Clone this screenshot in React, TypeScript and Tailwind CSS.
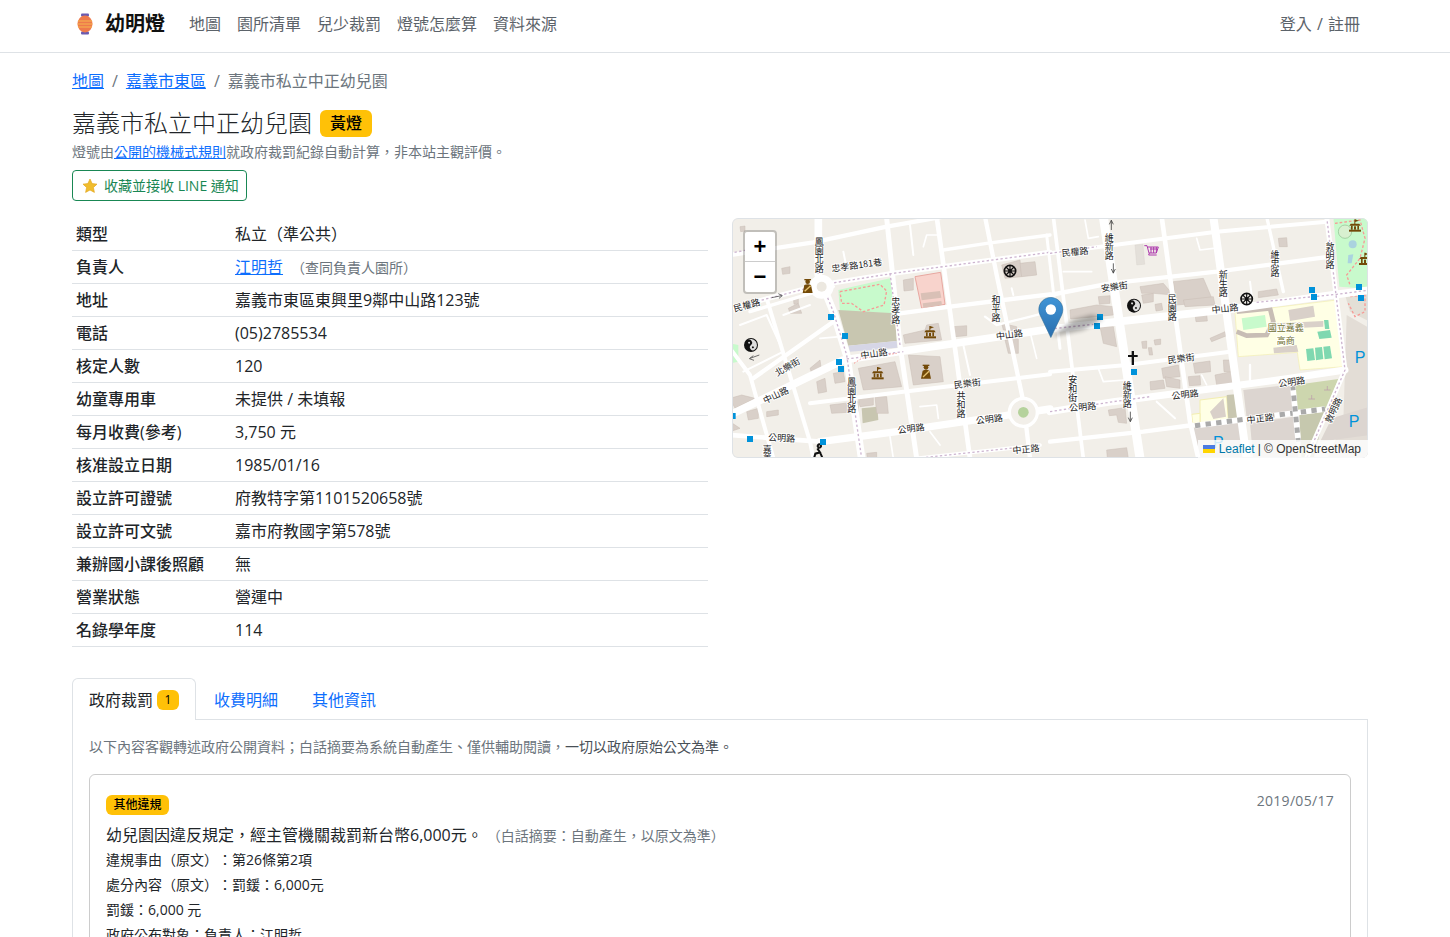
import React from "react";

const rows: [string, React.ReactNode][] = [
  ["類型", "私立\uFF08準公共\uFF09"],
  [
    "負責人",
    <>
      <a href="#" className="text-[#0d6efd] underline">江明哲</a>
      <span className="ml-2 text-sm text-[#6c757d]">{"\uFF08查同負責人園所\uFF09"}</span>
    </>,
  ],
  ["地址", "嘉義市東區東興里9鄰中山路123號"],
  ["電話", "(05)2785534"],
  ["核定人數", "120"],
  ["幼童專用車", "未提供 / 未填報"],
  ["每月收費(參考)", "3,750 元"],
  ["核准設立日期", "1985/01/16"],
  ["設立許可證號", "府教特字第1101520658號"],
  ["設立許可文號", "嘉市府教國字第578號"],
  ["兼辦國小課後照顧", "無"],
  ["營業狀態", "營運中"],
  ["名錄學年度", "114"],
];

const navLinks = ["地圖", "園所清單", "兒少裁罰", "燈號怎麼算", "資料來源"];

// map data is in 3x units, the right half sits under translate(960 0)
const leftRoads: [string, number][] = [
  ["0,120 250,82 470,35 640,5", 13],
  ["640,105 770,85 960,60", 10],
  ["510,295 660,275 960,238", 13],
  ["240,565 520,530 860,490 960,478", 12],
  ["560,730 930,690", 11],
  ["70,490 310,320", 13],
  ["0,400 60,480 130,730", 12],
  ["110,250 240,680 250,730", 12],
  ["470,10 510,390 560,730", 15],
  ["620,5 660,290 720,730", 14],
  ["765,5 800,180 880,560 900,730", 13],
  ["950,60 990,400", 9],
  ["0,660 270,680", 14],
  ["60,290 310,215", 10],
  ["540,30 550,120", 6],
  ["580,95 590,60 625,60", 5],
  ["340,110 350,160", 6],
  ["270,370 330,365", 5],
  ["570,575 620,570 625,610", 5],
  ["700,390 720,480", 6],
  ["900,350 920,430", 5],
  ["765,305 800,330 880,310 960,290", 7],
  ["30,330 110,300 160,410 40,470", 6],
  ["160,300 240,270", 6],
  ["845,220 850,240", 6],
  ["480,665 490,730", 5],
  ["600,650 630,690", 5],
];
const leftMain: [string, number][] = [
  ["265,5 265,180 310,290 350,420 395,730", 23],
  ["0,600 340,435 960,342", 23],
  ["0,280 270,210 490,175 960,112", 15],
  ["270,680 500,650 870,595 960,582", 22],
];
const rightRoads: [string, number][] = [
  ["0,115 500,50 830,20", 12],
  ["10,5 100,730", 11],
  ["335,5 420,620 445,730", 14],
  ["650,5 700,230", 10],
  ["0,240 180,205 500,170 840,125", 13],
  ["0,470 230,450 540,410", 12],
  ["0,680 280,650 430,630", 13],
  ["320,560 375,610", 6],
  ["600,450 600,500", 7],
  ["40,170 125,170", 5],
  ["105,15 115,70 145,65", 5],
  ["440,70 450,105 490,100", 5],
  ["145,460 160,500 225,495", 5],
  ["600,200 605,240", 6],
  ["455,480 470,510", 5],
];
const rightMain: [string, number][] = [
  ["0,342 130,328 560,280 860,238 960,225", 23],
  ["160,5 270,730", 27],
  ["490,5 590,730", 24],
  ["0,590 190,560 720,490 885,465", 21],
  ["830,5 885,465 800,660 770,730", 15],
];
const dashes = [
  "0,280 270,210 490,175 960,112",
  "0,115 50,105",
  "265,100 265,180 310,290 350,420 395,730",
  "480,175 510,390",
  "350,432 520,410",
  "560,730 930,690",
];
const buildingsLeft = [
  "385,460 495,440 515,515 400,525",
  "535,420 630,425 640,500 550,510",
  "520,360 585,345 590,330 625,325 635,375 525,385",
  "300,570 385,560 385,590 305,595",
  "385,550 430,545 430,570 390,575",
  "435,545 470,545 475,595 440,595",
  "50,590 85,580 85,610 55,615",
  "0,550 35,540 75,550 15,580",
  "310,475 340,470 345,500 315,505",
  "260,500 285,490 290,530 265,535",
  "520,195 550,190 550,225 522,228",
  "175,280 205,265 215,295 180,295",
  "670,335 710,332 710,362 675,365",
  "815,150 870,135 875,185 825,190",
  "870,145 915,140 920,180 875,185",
  "825,375 865,372 865,415 835,415",
  "815,325 860,335 860,350 820,345",
  "0,620 30,640 0,650",
  "110,590 145,585 145,600 110,605",
  "240,460 270,435 275,470 245,475",
  "155,160 180,155 180,175 158,178",
  "30,35 45,33 45,48 32,50",
  "190,250 205,245 205,265 192,268",
  "410,715 440,712 440,730 412,730",
];
const buildingsRight = [
  "60,285 140,270 190,275 190,300 62,312",
  "150,335 190,335 200,395 160,385",
  "270,215 340,205 370,240 310,235 275,235",
  "275,240 310,235 310,260 280,265",
  "370,200 460,190 490,260 380,270",
  "145,245 180,242 180,265 148,268",
  "435,298 470,295 472,318 438,320",
  "480,370 525,350 530,362 485,380",
  "275,380 290,378 290,400 278,400",
  "312,375 332,372 332,388 315,390",
  "295,398 305,398 308,420 298,420",
  "335,460 385,450 390,485 340,490",
  "300,500 340,495 345,520 302,525",
  "345,485 390,495 390,520 350,515",
  "415,485 450,482 452,510 418,512",
  "430,445 480,438 482,470 435,475",
  "495,480 545,470 548,505 500,510",
  "520,435 542,435 545,470 522,470",
  "175,585 225,578 230,625 205,622 200,600 178,602",
  "625,230 680,222 685,240 625,248",
  "685,70 710,68 712,95 688,95",
  "170,705 230,698 235,730 172,730",
  "400,255 490,245 495,270 405,275",
  "315,268 335,265 338,285 318,288",
];

function Road({ points, width, color = "#fff" }: { points: string; width: number; color?: string }) {
  return <polyline points={points} fill="none" stroke={color} strokeWidth={width} strokeLinejoin="round" strokeLinecap="round" />;
}

function Lbl({ x, y, t, rot = 0, v = false, color = "#222" }: { x: number; y: number; t: string; rot?: number; v?: boolean; color?: string }) {
  return (
    <text
      x={x}
      y={y}
      transform={rot ? `rotate(${rot} ${x} ${y})` : undefined}
      textAnchor="middle"
      dominantBaseline="central"
      fontSize="27"
      fill={color}
      stroke="#fff"
      strokeWidth="5"
      className={v ? "font-['Noto_Sans_CJK_TC',sans-serif] [paint-order:stroke] [writing-mode:vertical-rl]" : "font-['Noto_Sans_CJK_TC',sans-serif] [paint-order:stroke]"}
    >
      {t}
    </text>
  );
}

function Temple({ x, y, c = "#734a08" }: { x: number; y: number; c?: string }) {
  return (
    <g transform={`translate(${x} ${y})`} fill={c}>
      <rect x="-2" y="-22" width="3" height="14" />
      <path d="M0 -22 L12 -18 L0 -14Z" />
      <path d="M-17 -3 L-13 -9 H13 L17 -3Z" />
      <rect x="-12" y="-3" width="5" height="12" />
      <rect x="7" y="-3" width="5" height="12" />
      <rect x="-3" y="-1" width="6" height="10" />
      <rect x="-18" y="9" width="36" height="6" />
    </g>
  );
}

function Person({ x, y }: { x: number; y: number }) {
  return (
    <g transform={`translate(${x} ${y})`}>
      <circle cx="0" cy="-13" r="7" fill="#734a08" />
      <rect x="-10" y="-21" width="20" height="4" fill="#734a08" />
      <path d="M-15 21 L-10 -3 Q0 -8 10 -3 L15 21Z" fill="#734a08" />
      <path d="M-9 16 L9 -1" stroke="#e6c370" strokeWidth="4" />
    </g>
  );
}

function YinYang({ x, y }: { x: number; y: number }) {
  return (
    <g transform={`translate(${x} ${y})`}>
      <circle r="21" fill="#111" />
      <g transform="rotate(-40)">
        <path d="M0 -18 A18 18 0 0 1 0 18 A9 9 0 0 1 0 0 A9 9 0 0 0 0 -18Z" fill="#ddd" />
        <circle cx="0" cy="9" r="3" fill="#111" />
        <circle cx="0" cy="-9" r="3" fill="#ddd" />
      </g>
    </g>
  );
}

function Wheel({ x, y }: { x: number; y: number }) {
  return (
    <g transform={`translate(${x} ${y})`} stroke="#111" fill="none">
      <circle r="17" strokeWidth="5" />
      <circle r="5" fill="#111" strokeWidth="1" />
      <path d="M-17 0H17M0 -17V17M-12 -12L12 12M12 -12L-12 12" strokeWidth="3.5" />
    </g>
  );
}

function Sq({ x, y }: { x: number; y: number }) {
  return <rect x={x - 9} y={y - 9} width="18" height="18" fill="#0092da" />;
}

function MapDrawing() {
  return (
    <svg viewBox="6 9 1908 720" width="636" height="240" className="block">
      <defs>
        <linearGradient id="pin" x1="0" y1="0" x2="0" y2="1">
          <stop offset="0" stopColor="#3f94d6" />
          <stop offset="1" stopColor="#2a6eae" />
        </linearGradient>
        <filter id="soft" x="-30%" y="-30%" width="160%" height="160%">
          <feGaussianBlur stdDeviation="7" />
        </filter>
      </defs>
      <rect x="0" y="0" width="1920" height="735" fill="#f2efe9" />

      {/* left half */}
      <g>
        <polygon points="0,385 25,390 25,440 0,445" fill="#c8facc" />
        <polygon points="325,225 480,190 498,295 330,290" fill="#c8facc" />
        <polygon points="325,285 495,295 500,378 355,392" fill="#c8c6b0" />
        <polygon points="355,392 500,378 502,398 360,410" fill="#d6d6e6" />
        <polyline points="330,230 450,208 470,228 462,270 400,290 365,265 335,265 330,230" fill="none" stroke="#f79a96" strokeWidth="4" strokeDasharray="8 6" />
        <polygon points="555,185 632,172 645,268 575,280" fill="#f8d3cc" stroke="#e8a7a0" strokeWidth="3" />
        <polygon points="572,235 630,228 634,248 575,256" fill="#d9c0b6" />
        <polygon points="578,265 634,258 636,270 580,278" fill="#d9c0b6" />
        <polygon points="395,580 442,575 445,615 398,625" fill="#c8c6b0" />
        {buildingsLeft.map((p, i) => (
          <polygon key={i} points={p} fill="#d9d0c9" stroke="#c8bdb5" strokeWidth="1.5" />
        ))}
        {leftRoads.map(([p, w], i) => <Road key={i} points={p} width={w} />)}
        {leftMain.map(([p, w], i) => <Road key={i} points={p} width={w} />)}
        {dashes.map((p, i) => (
          <polyline key={i} points={p} fill="none" stroke="#cdb5d0" strokeWidth="4" strokeDasharray="7 7" />
        ))}
        <polyline points="372,445 395,430 500,415" fill="none" stroke="#f79a96" strokeWidth="3" strokeDasharray="5 5" />
        <circle cx="275" cy="215" r="36" fill="#fff" />
        <circle cx="275" cy="215" r="15" fill="#ece8e0" />
        <circle cx="880" cy="592" r="42" fill="#f2efe9" stroke="#fff" strokeWidth="10" />
        <circle cx="880" cy="592" r="16" fill="#b5d29c" />

        <Person x={233} y={213} />
        <Person x={588} y={470} />
        <Temple x={600} y={355} />
        <Temple x={443} y={478} />
        <YinYang x={63} y={390} />
        <Wheel x={840} y={168} />
        <path d="M262 700 l8 12 l-14 4 l-4 14 M268 698 a5 5 0 1 1 .1 0 M270 712 l8 18" stroke="#111" strokeWidth="6" fill="none" />
        <path d="M125 248 L155 242 M145 236 L157 242 L147 250" stroke="#555" strokeWidth="2.5" fill="none" />
        <path d="M60 430 L88 420 M70 422 L58 431 L72 436" stroke="#555" strokeWidth="2.5" fill="none" />

        {[[303, 306], [345, 363], [327, 441], [333, 462], [60, 672], [279, 681], [8, 603]].map(([x, y]) => <Sq key={`${x}-${y}`} x={x} y={y} />)}

        <Lbl x={268} y={120} t="鳳園北路" v />
        <Lbl x={380} y={150} t="忠孝路181巷" rot={-8} />
        <Lbl x={50} y={270} t="民權路" rot={-15} />
        <Lbl x={497} y={287} t="忠孝路" v />
        <Lbl x={798} y={280} t="和平路" v />
        <Lbl x={838} y={358} t="中山路" rot={-8} />
        <Lbl x={432} y={415} t="中山路" rot={-8} />
        <Lbl x={172} y={455} t="北樂街" rot={-30} />
        <Lbl x={137} y={540} t="中山路" rot={-25} />
        <Lbl x={365} y={540} t="鳳園北路" v />
        <Lbl x={712} y={505} t="民樂街" rot={-7} />
        <Lbl x={693} y={570} t="共和路" v />
        <Lbl x={778} y={612} t="公明路" rot={-7} />
        <Lbl x={543} y={640} t="公明路" rot={-7} />
        <Lbl x={155} y={668} t="公明路" rot={3} />
        <Lbl x={888} y={702} t="中正路" rot={-5} />
        <Lbl x={112} y={716} t="嘉義" v />
      </g>

      {/* right half */}
      <g transform="translate(960 0)">
        <polygon points="555,292 860,255 882,455 750,465 742,412 565,425" fill="#ffffe5" stroke="#f3eeb0" strokeWidth="2" />
        <polygon points="575,310 645,300 650,335 580,345" fill="#c8facc" />
        <polyline points="560,290 660,280 670,320 650,360 590,362 560,350" fill="none" stroke="#c8bdb5" strokeWidth="14" />
        <polygon points="715,285 790,272 795,305 720,318" fill="#d9d0c9" />
        <polygon points="680,325 820,318 820,335 685,342" fill="#d9d0c9" />
        <polygon points="670,398 740,390 745,410 672,415" fill="#d9d0c9" />
        <polygon points="802,350 840,345 845,368 808,372" fill="#7fd8b0" />
        <polygon points="822,315 835,315 838,342 825,342" fill="#7fd8b0" />
        <polygon points="768,402 790,400 795,435 772,438" fill="#7fd8b0" />
        <polygon points="795,398 816,396 820,432 798,436" fill="#7fd8b0" />
        <polygon points="820,395 840,393 846,430 824,433" fill="#7fd8b0" />

        <polygon points="850,5 960,5 960,222 868,215" fill="#c8facc" />
        <polyline points="855,25 930,15 945,70 930,130 890,180 900,210" fill="none" stroke="#f79a96" strokeWidth="4" strokeDasharray="8 6" />
        <circle cx="885" cy="50" r="20" fill="#d8f0d0" stroke="#8ebd8e" strokeWidth="2" />
        <circle cx="908" cy="88" r="12" fill="#aad3df" />
        <polygon points="895,120 910,118 905,145 893,145" fill="#aad3df" />
        <polygon points="885,240 960,235 960,320 900,290" fill="#e3dfd6" />
        <polyline points="900,245 945,240 945,290 915,305 895,265" fill="none" stroke="#f79a96" strokeWidth="4" strokeDasharray="8 6" />
        <polygon points="890,300 960,340 960,735 830,735 880,620" fill="#e3ddd6" />

        <polygon points="580,525 730,508 738,590 590,610" fill="#dcd5d0" />
        <polygon points="735,510 865,492 830,580 742,590" fill="#cdd6ae" />
        <polygon points="748,600 825,590 790,735 755,735" fill="#c6c8ae" />
        <polygon points="430,640 565,618 590,735 440,735" fill="#dcd5d0" />
        <polygon points="600,625 730,605 745,735 610,735" fill="#dcd5d0" />
        <polygon points="845,610 960,575 960,660 810,680" fill="#dcd5d0" />
        <polygon points="450,555 530,545 535,615 450,625" fill="#ffffe5" stroke="#f3eeb0" strokeWidth="3" />
        <polygon points="425,598 450,595 450,625 428,625" fill="#ffffe5" stroke="#f3eeb0" strokeWidth="3" />
        <polygon points="530,540 555,538 565,610 535,615" fill="#c8c6b0" />
        <polygon points="480,590 520,550 528,605 490,612" fill="#d9d0c9" />
        <rect x="255" y="90" width="24" height="60" fill="#e4e0da" stroke="#d5d0ca" transform="rotate(-5 255 90)" />

        {buildingsRight.map((p, i) => (
          <polygon key={i} points={p} fill="#d9d0c9" stroke="#c8bdb5" strokeWidth="1.5" />
        ))}
        {rightRoads.map(([p, w], i) => <Road key={i} points={p} width={w} />)}
        {rightMain.map(([p, w], i) => <Road key={i} points={p} width={w} />)}
        <polyline points="0,115 50,108 140,95" fill="none" stroke="#cdb5d0" strokeWidth="4" strokeDasharray="7 7" />
        <polyline points="0,342 130,328" fill="none" stroke="#cdb5d0" strokeWidth="4" strokeDasharray="7 7" />
        <polyline points="620,262 860,238 960,225" fill="none" stroke="#cdb5d0" strokeWidth="4" strokeDasharray="7 7" />
        <polyline points="0,590 190,560 300,545" fill="none" stroke="#cdb5d0" strokeWidth="4" strokeDasharray="7 7" />
        <polyline points="830,5 885,465 800,660 770,730" fill="none" stroke="#cdb5d0" strokeWidth="4" strokeDasharray="7 7" />
        <polyline points="435,632 825,582" fill="none" stroke="#fff" strokeWidth="17" />
        <polyline points="435,632 825,582" fill="none" stroke="#aaa" strokeWidth="15" strokeDasharray="16 16" />
        <polyline points="728,510 745,680" fill="none" stroke="#fff" strokeWidth="17" />
        <polyline points="728,510 745,680" fill="none" stroke="#aaa" strokeWidth="15" strokeDasharray="16 16" />

        <g stroke="#b9a" fill="none" strokeWidth="2">
          <path d="M785 552 v-12 M775 552 h20 M832 525 v-12 M822 525 h20" />
        </g>
        <path d="M283 92 h8 l6 22 h22 l6 -18 h-32 M298 114 l-2 6 h24 M300 102 h22 M303 96 v18 M311 96 v18 M319 96 v18" stroke="#ac39ac" strokeWidth="3" fill="none" />
        <rect x="245" y="408" width="7" height="42" fill="#111" />
        <rect x="234" y="420" width="29" height="6" fill="#111" />
        <Temple x={915} y={35} c="#734a08" />
        <Temple x={945} y={135} c="#734a08" />
        <YinYang x={252} y={272} />
        <Wheel x={590} y={252} />
        <path d="M184 15 v30 M178 28 l6 -12 l6 12" stroke="#444" strokeWidth="2.5" fill="none" />
        <path d="M190 145 v30 M184 162 l6 12 l6 -12" stroke="#444" strokeWidth="2.5" fill="none" />
        <path d="M241 590 v30 M235 608 l6 12 l6 -12" stroke="#444" strokeWidth="2.5" fill="none" />

        {[[150, 306], [141, 333], [252, 471], [786, 225], [792, 246], [927, 216], [933, 249]].map(([x, y]) => <Sq key={`${x}-${y}`} x={x} y={y} />)}

        <Lbl x={75} y={110} t="民權路" rot={-6} />
        <Lbl x={178} y={95} t="維新路" v />
        <Lbl x={193} y={215} t="安樂街" rot={-8} />
        <Lbl x={232} y={540} t="維新路" v />
        <Lbl x={520} y={205} t="新生路" v />
        <Lbl x={367} y={278} t="民園路" v />
        <Lbl x={675} y={145} t="維忠路" v />
        <Lbl x={840} y={122} t="敦明路" v />
        <Lbl x={525} y={280} t="中山路" rot={-6} />
        <Lbl x={393} y={430} t="民樂街" rot={-7} />
        <Lbl x={405} y={538} t="公明路" rot={-7} />
        <Lbl x={725} y={500} t="公明路" rot={-8} />
        <Lbl x={98} y={575} t="公明路" rot={-5} />
        <Lbl x={68} y={520} t="安和街" v />
        <Lbl x={630} y={610} t="中正路" rot={-7} />
        <Lbl x={850} y={585} t="敦明路" rot={-65} />
        <Lbl x={707} y={336} t="國立嘉義" color="#6e6e30" />
        <Lbl x={707} y={376} t="高商" color="#6e6e30" />
        <text x="930" y="445" fontSize="48" fill="#0092da" textAnchor="middle" className="font-['Liberation_Sans',sans-serif]">P</text>
        <text x="912" y="636" fontSize="48" fill="#0092da" textAnchor="middle" className="font-['Liberation_Sans',sans-serif]">P</text>
        <text x="505" y="700" fontSize="48" fill="#0092da" textAnchor="middle" className="font-['Liberation_Sans',sans-serif]">P</text>
      </g>

      {/* marker */}
      <polygon points="963,366 1030,315 1085,300 1120,312 1060,345" fill="#000" opacity="0.3" filter="url(#soft)" />
      <g transform="translate(925 246) scale(3)">
        <path d="M12.5 0.5C5.8 0.5 0.5 5.9 0.5 12.5C0.5 15.5 1.8 18.5 3.2 21L12.5 40.5L21.8 21C23.2 18.5 24.5 15.5 24.5 12.5C24.5 5.9 19.2 0.5 12.5 0.5Z" fill="url(#pin)" stroke="#2e6c97" strokeWidth="0.6" />
        <circle cx="12.5" cy="12.5" r="5.2" fill="#fff" />
      </g>
    </svg>
  );
}

export default function App() {
  return (
    <div className="h-[937px] overflow-hidden bg-white text-base text-[#212529] [text-spacing-trim:space-all] font-['Open_Sans','Noto_Sans_CJK_TC',sans-serif]">
      <nav className="h-[53px] border-b border-[#dee2e6]">
        <div className="w-[1440px]">
          <div className="mx-auto flex h-[52px] w-[1320px] items-center px-3 pb-1">
            <a href="#" className="ml-[4px] flex items-center gap-[11px] text-xl font-semibold text-[#111]">
              <svg viewBox="0 0 18 22" width="18" height="22">
                <rect x="5" y="0.5" width="8" height="3" rx="1" fill="#6b5bb0" />
                <rect x="5" y="18.5" width="8" height="3" rx="1" fill="#6b5bb0" />
                <ellipse cx="9" cy="11" rx="7.5" ry="8.5" fill="#ee7a4c" />
                <path d="M2 8h14M1.6 11h14.8M2 14h14" stroke="#f6b74d" strokeWidth="1.2" />
              </svg>
              幼明燈
            </a>
            <ul className="ml-6 flex gap-4 text-[#5c636a]">
              {navLinks.map((l) => (
                <li key={l}><a href="#">{l}</a></li>
              ))}
            </ul>
            <a href="#" className="ml-auto mr-2 text-[#5c636a] [word-spacing:1px]">登入 / 註冊</a>
          </div>
        </div>
      </nav>

      <div className="w-[1440px]">
        <main className="mx-auto w-[1320px] px-3">
          <div className="mt-4 flex h-6 items-center gap-2 text-[#6c757d]">
            <a href="#" className="text-[#0d6efd] underline">地圖</a>
            <span>/</span>
            <a href="#" className="text-[#0d6efd] underline">嘉義市東區</a>
            <span>/</span>
            <span>嘉義市私立中正幼兒園</span>
          </div>

          <div className="mt-4 flex h-[28px] items-center gap-2">
            <h1 className="text-2xl font-light leading-[28px] text-[#212529]">嘉義市私立中正幼兒園</h1>
            <span className="rounded-md bg-[#ffc107] px-[10px] py-[2px] text-base font-medium leading-[23px] text-black">黃燈</span>
          </div>
          <p className="mt-[4px] text-sm leading-[21px] text-[#6c757d]">
            燈號由<a href="#" className="text-[#0d6efd] underline">公開的機械式規則</a>{"就政府裁罰紀錄自動計算\uFF0C非本站主觀評價。"}
          </p>
          <button className="mt-[8px] flex h-[31px] items-center gap-[6px] rounded border border-[#198754] pl-[9px] pr-[7px] text-sm text-[#198754]">
            <svg viewBox="0 0 24 24" width="16" height="16">
              <path d="M12 1.5l3.2 6.8 7.3.9-5.4 5 1.5 7.4L12 18l-6.6 3.6 1.5-7.4-5.4-5 7.3-.9z" fill="#f0bd2e" stroke="#e2a51c" strokeLinejoin="round" />
            </svg>
            收藏並接收 LINE 通知
          </button>

          <div className="mt-[17px] grid grid-cols-2 gap-6">
            <table className="w-[636px] border-separate border-spacing-0 self-start">
              <tbody>
                {rows.map(([k, v]) => (
                  <tr key={k} className="h-[33px]">
                    <th className="w-[159px] border-b border-[#dee2e6] p-1 text-left font-medium leading-6">{k}</th>
                    <td className="border-b border-[#dee2e6] p-1 leading-6">{v}</td>
                  </tr>
                ))}
              </tbody>
            </table>

            <div className="relative h-[240px] w-[636px] self-start overflow-hidden rounded-md">
              <MapDrawing />
              <div className="absolute inset-0 rounded-md border border-[#dee2e6]" />
              <div className="absolute left-[11px] top-[12px] w-[34px] rounded border-2 border-black/20 bg-clip-padding">
                <div className="flex h-[30px] items-center justify-center rounded-t-[3px] border-b border-[#ccc] bg-white text-[22px] font-bold leading-none text-black font-['Liberation_Sans',sans-serif]">+</div>
                <div className="flex h-[30px] items-center justify-center rounded-b-[3px] bg-white text-[22px] font-bold leading-none text-black font-['Liberation_Sans',sans-serif]">−</div>
              </div>
              <div className="absolute bottom-0 right-0 flex h-[18px] items-center gap-[3px] bg-white/80 pb-[1px] pl-[5px] pr-[7px] text-xs text-[#333] font-['Liberation_Sans',sans-serif]">
                <svg viewBox="0 0 12 8" width="12" height="8" className="mr-[1px]">
                  <rect width="12" height="4" fill="#4C7BE1" />
                  <rect y="4" width="12" height="4" fill="#FFD500" />
                </svg>
                <a href="#" className="text-[#0078a8]">Leaflet</a>
                <span>| © OpenStreetMap</span>
              </div>
            </div>
          </div>

          <div className="mt-[31px]">
            <div className="flex h-[42px] gap-[2px] border-b border-[#dee2e6]">
              <button className="flex h-[42px] items-center gap-1 rounded-t-md border border-b-0 border-[#dee2e6] bg-white px-4 text-[#212529]">
                政府裁罰
                <span className="flex h-5 w-[22px] items-center justify-center rounded-md bg-[#ffc107] text-xs text-black">1</span>
              </button>
              <button className="h-[42px] px-4 pt-[2px] text-[#0d6efd]">收費明細</button>
              <button className="h-[42px] px-4 pt-[2px] text-[#0d6efd]">其他資訊</button>
            </div>
            <div className="border-x border-[#dee2e6] px-4 pt-4">
              <p className="text-sm leading-[21px] text-[#6c757d]">
                {"以下內容客觀轉述政府公開資料\uFF1B白話摘要為系統自動產生、僅供輔助閱讀\uFF0C"}<span className="text-[#495057]">一切以政府原始公文為準。</span>
              </p>
              <div className="mt-[17px] rounded-md border border-black/20 p-4 pt-5">
                <div className="flex items-start justify-between">
                  <span className="rounded-md bg-[#ffc107] px-[7.5px] text-xs font-medium leading-5 text-black">其他違規</span>
                  <span className="-mt-px text-sm leading-[14px] tracking-[0.3px] text-[#6c757d]">2019/05/17</span>
                </div>
                <p className="mt-2 leading-6">
                  {"幼兒園因違反規定\uFF0C經主管機關裁罰新台幣6,000元。"}
                  <span className="ml-1 text-sm text-[#6c757d]">{"\uFF08白話摘要\uFF1A自動產生\uFF0C以原文為準\uFF09"}</span>
                </p>
                <p className="text-sm leading-[25px]">{"違規事由\uFF08原文\uFF09\uFF1A第26條第2項"}</p>
                <p className="text-sm leading-[25px]">{"處分內容\uFF08原文\uFF09\uFF1A罰鍰\uFF1A6,000元"}</p>
                <p className="text-sm leading-[25px]">{"罰鍰\uFF1A6,000 元"}</p>
                <p className="text-sm leading-[25px]">{"政府公布對象\uFF1A負責人\uFF1A江明哲"}</p>
              </div>
            </div>
          </div>
        </main>
      </div>
    </div>
  );
}
